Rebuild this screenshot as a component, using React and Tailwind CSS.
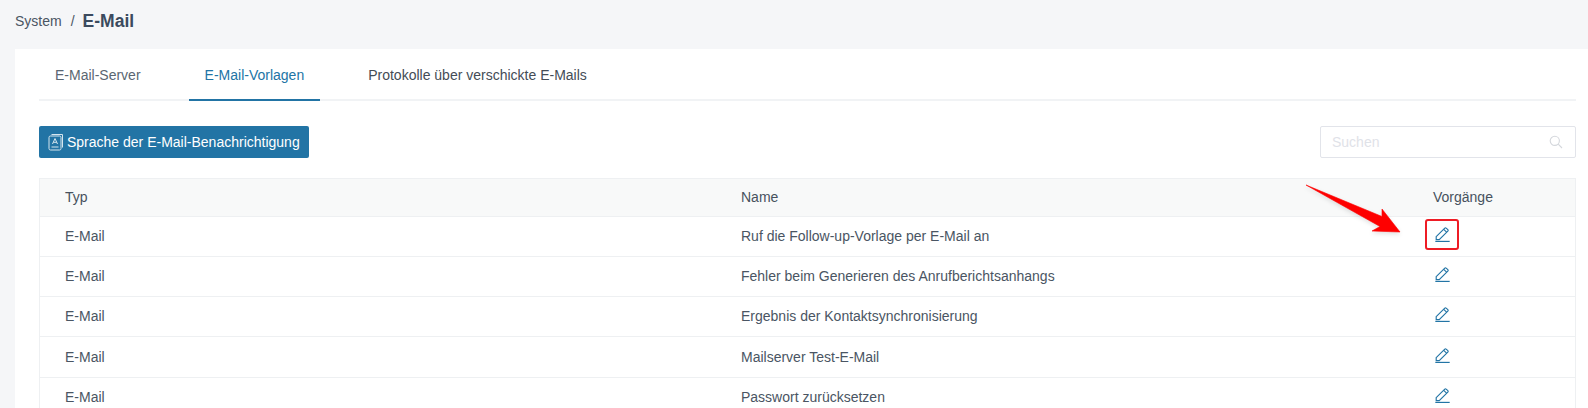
import React from "react";

function Edit() {
  return (
    <svg width="15" height="15" viewBox="0 0 15 15" fill="none" stroke="#2274a5" strokeWidth="1.15" className="block">
      <path d="M1.2 9.6 9.8 1.2a1 1 0 0 1 1.4 0l1.6 1.5a1 1 0 0 1 0 1.4L4.2 12.6H1.2z" />
      <path d="M8.7 2.4 11.6 5.2" />
      <path d="M0.3 14.4h14.4" />
    </svg>
  );
}

const rows = [
  ["Ruf die Follow-up-Vorlage per E-Mail an", "h-[40px]"],
  ["Fehler beim Generieren des Anrufberichtsanhangs", "h-[40px]"],
  ["Ergebnis der Kontaktsynchronisierung", "h-[40px]"],
  ["Mailserver Test-E-Mail", "h-[41px]"],
  ["Passwort zurücksetzen", "h-[40px]"],
];

export default function App() {
  return (
    <div className="relative h-[408px] overflow-hidden bg-[#f5f6f8] pl-[15px] font-['Liberation_Sans',Arial,sans-serif] text-[14px] text-[#4a5563]">
      <div className="flex h-[49px] items-start pt-[12px]">
        <span className="leading-[18px]">System</span>
        <span className="ml-[9px] leading-[18px]">/</span>
        <span className="ml-[8px] text-[17.5px] font-bold leading-[18px] text-[#3b4a5e]">E-Mail</span>
      </div>
      <div className="h-[359px] bg-white pl-[24px] pr-[12px]">
        <div className="flex h-[52px] gap-[32px] border-b-2 border-[#f1f3f5]">
          <div className="flex h-[52px] items-center border-b-2 border-transparent px-[16px] pt-[2px] text-[#5a6672]">E-Mail-Server</div>
          <div className="flex h-[52px] items-center border-b-2 border-[#2274a5] px-[16px] pt-[2px] text-[#2274a5]">E-Mail-Vorlagen</div>
          <div className="flex h-[52px] items-center border-b-2 border-transparent px-[16px] pt-[2px] text-[#444c56]">Protokolle über verschickte E-Mails</div>
        </div>
        <div className="mt-[25px] flex items-center justify-between">
          <button className="flex h-[32px] w-[270px] items-center gap-[3px] rounded-[2px] bg-[#2274a5] pl-[9px] text-white">
            <svg width="16" height="18" viewBox="0 0 16 18" fill="none" stroke="#d5e5ee" strokeWidth="1">
              <path d="M3.5 1.5h11v13" />
              <rect x="1" y="3" width="12" height="14" rx="1.5" />
              <path d="M4.5 11 7 5.5 9.5 11M5.3 9.3h3.4M3.5 14h7" />
            </svg>
            <span>Sprache der E-Mail-Benachrichtigung</span>
          </button>
          <div className="flex h-[32px] w-[256px] items-center justify-between rounded-[2px] border border-[#e2e4ea] pl-[11px] pr-[12px] text-[#dfe2e8]">
            <span>Suchen</span>
            <svg width="14" height="14" viewBox="0 0 14 14" fill="none" stroke="#d4d7dc" strokeWidth="1.1">
              <circle cx="5.8" cy="5.8" r="4.6" />
              <path d="M9.2 9.2 13 13" />
            </svg>
          </div>
        </div>
        <div className="mt-[20px] border border-[#eef0f2]">
          <div className="grid h-[38px] grid-cols-[701px_692px_1fr] items-center border-b border-[#eef0f2] bg-[#f8f9f9] text-[#47525e]">
            <div className="pl-[25px]">Typ</div>
            <div>Name</div>
            <div>Vorgänge</div>
          </div>
          {rows.map(([n, h]) => (
            <div key={n} className={`grid ${h} grid-cols-[701px_692px_1fr] items-center border-b border-[#eef0f2]`}>
              <div className="pl-[25px]">E-Mail</div>
              <div>{n}</div>
              <div className="pl-[2px] pb-[4px]">
                <Edit />
              </div>
            </div>
          ))}
        </div>
      </div>
      <svg className="absolute left-[1300px] top-[180px] drop-shadow-[0_2px_2px_rgba(0,0,0,0.12)]" width="104" height="56" viewBox="0 0 104 56">
        <path d="M6 5 L82 36.5 L82 29 L100 52 L72 51 L80 46.5 Z" fill="#fe0000" stroke="#fe0000" strokeWidth="0.6" />
      </svg>
      <div className="absolute left-[1425px] top-[219px] h-[31px] w-[34px] rounded-[3px] border-2 border-[#ee1c25]" />
    </div>
  );
}
